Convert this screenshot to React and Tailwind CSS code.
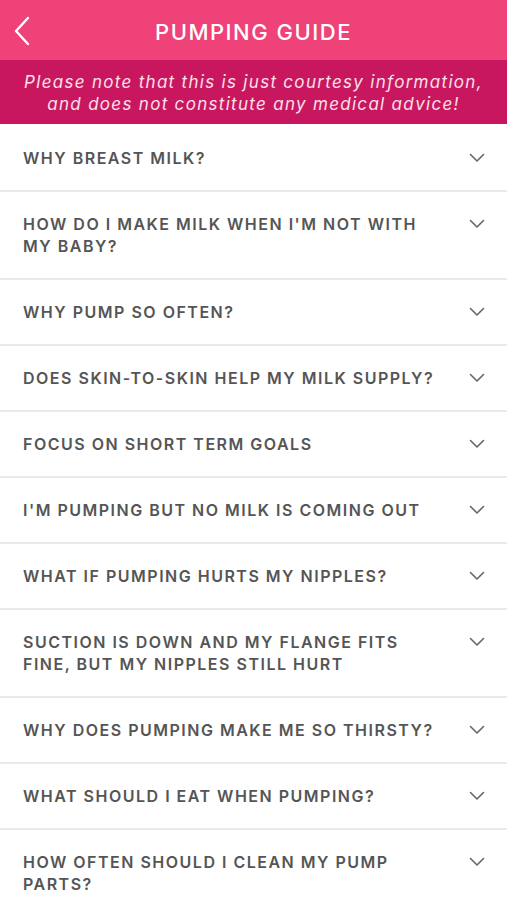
import React from "react";

const items = [
  "WHY BREAST MILK?",
  "HOW DO I MAKE MILK WHEN I'M NOT WITH MY BABY?",
  "WHY PUMP SO OFTEN?",
  "DOES SKIN-TO-SKIN HELP MY MILK SUPPLY?",
  "FOCUS ON SHORT TERM GOALS",
  "I'M PUMPING BUT NO MILK IS COMING OUT",
  "WHAT IF PUMPING HURTS MY NIPPLES?",
  "SUCTION IS DOWN AND MY FLANGE FITS FINE, BUT MY NIPPLES STILL HURT",
  "WHY DOES PUMPING MAKE ME SO THIRSTY?",
  "WHAT SHOULD I EAT WHEN PUMPING?",
  "HOW OFTEN SHOULD I CLEAN MY PUMP PARTS?",
];

function Chevron() {
  return (
    <svg width="16" height="10" viewBox="0 0 16 10" className="shrink-0 mt-[6px]">
      <path d="M1.5 1.5 L8 8 L14.5 1.5" fill="none" stroke="#666" strokeWidth="1.6" strokeLinecap="round" strokeLinejoin="round" />
    </svg>
  );
}

export default function App() {
  return (
    <div className="w-[507px] h-[900px] overflow-hidden bg-white font-['Inter',sans-serif]">
      <div className="h-[60px] bg-[#ee4278] flex items-center relative">
        <svg width="18" height="30" viewBox="0 0 18 30" className="absolute left-[13px] top-[16px]">
          <path d="M15 2 L3 15 L15 28" fill="none" stroke="white" strokeWidth="2.4" strokeLinecap="round" strokeLinejoin="round" />
        </svg>
        <div className="w-full text-center text-white text-[22px] font-medium tracking-[1.5px] pt-[4px]">
          PUMPING GUIDE
        </div>
      </div>
      <div className="h-[64px] bg-[#c8175f] flex flex-col items-center justify-center text-[#fbe0ea] italic text-[17px] leading-[22px] tracking-[1.3px] pt-[2px]">
        <div>Please note that this is just courtesy information,</div>
        <div>and does not constitute any medical advice!</div>
      </div>
      <div className="flex flex-col pt-[2px]">
        {items.map((t, i) => (
          <div key={i} className="flex items-start justify-between pl-[23px] pr-[22px] py-[21px] border-b-2 border-[#e9e9e9]">
            <div className="text-[16px] leading-[22px] font-semibold tracking-[1.5px] text-[#555555] max-w-[420px]">
              {t}
            </div>
            <Chevron />
          </div>
        ))}
      </div>
    </div>
  );
}
